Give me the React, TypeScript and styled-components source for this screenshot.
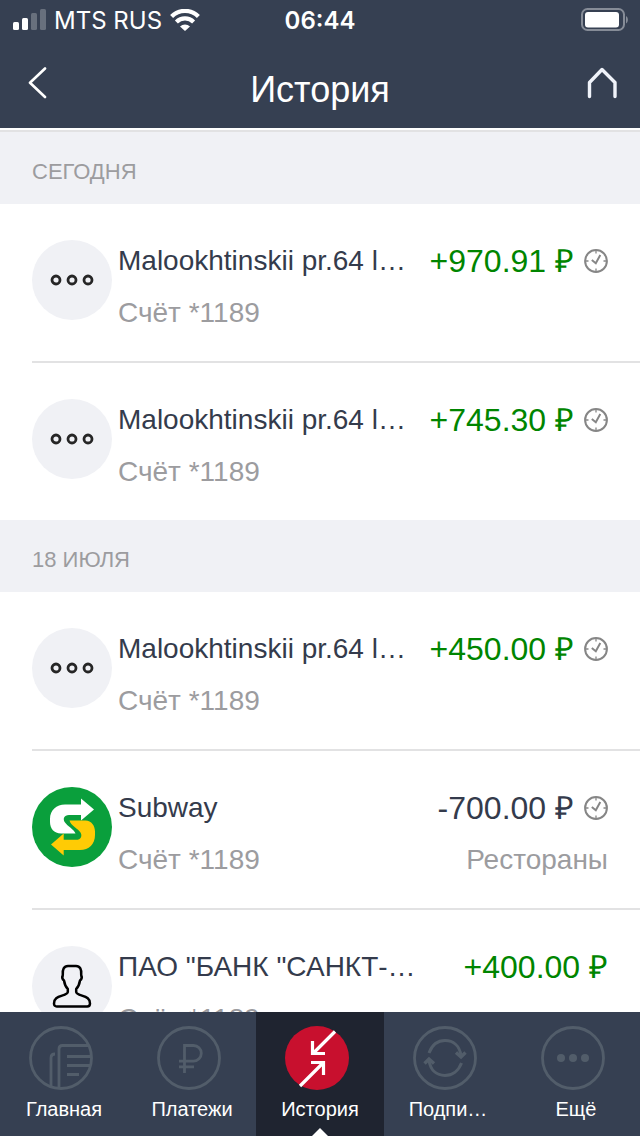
import React from "react";
import styled, { createGlobalStyle } from "styled-components";

const color = {
  bar: "#364052",
  barActive: "#1f2430",
  accent: "#c8102e",
  section: "#f0f1f5",
  ink: "#343b4c",
  muted: "#9c9c9f",
  income: "#008500",
  line: "#e2e2e3",
  tabIcon: "#525d6a",
};

const GlobalStyle = createGlobalStyle`
  * { box-sizing: border-box; }
  body {
    margin: 0;
    background: #fff;
    color: ${color.ink};
    font-family: "Liberation Sans", Arial, sans-serif;
  }
`;

const Screen = styled.div`
  display: flex;
  flex-direction: column;
  height: 100vh;
`;

const Header = styled.header`
  flex: none;
  background: ${color.bar};
  color: #fff;
`;

const StatusBar = styled.div`
  display: grid;
  grid-template-columns: 1fr auto 1fr;
  align-items: center;
  height: 40px;
  padding: 0 12px;
  font-family: Inter, sans-serif;
  font-size: 24px;
`;

const Carrier = styled.div`
  display: flex;
  align-items: center;
  gap: 8px;
  white-space: nowrap;
`;

const Clock = styled.time`
  font-weight: 600;
`;

const BatterySlot = styled.div`
  display: flex;
  justify-content: flex-end;
`;

const TitleBar = styled.div`
  display: grid;
  grid-template-columns: 76px 1fr 76px;
  height: 88px;
`;

const Title = styled.h1`
  margin: 0;
  text-align: center;
  font-size: 36px;
  font-weight: 400;
  line-height: 100px;
`;

const IconButton = styled.button`
  display: flex;
  justify-content: center;
  align-items: center;
  padding: 0 0 14px;
  border: 0;
  background: none;
  color: #fff;
  cursor: pointer;
`;

const History = styled.main`
  flex: 1;
  min-height: 0;
  margin-top: 2px;
  border-top: 2px solid ${color.line};
  overflow-y: auto;
  scrollbar-width: none;
`;

const SectionTitle = styled.h2`
  margin: 0;
  padding: 6px 32px 0;
  height: 72px;
  background: ${color.section};
  color: ${color.muted};
  font-size: 22px;
  font-weight: 400;
  line-height: 67px;
`;

const List = styled.ul`
  margin: 0;
  padding: 0 0 0 32px;
  list-style: none;
`;

const Row = styled.li`
  display: flex;
  gap: 6px;
  height: 159px;
  padding: 36px 32px 0 0;
  border-bottom: 2px solid ${color.line};

  &:last-child {
    height: 157px;
    border-bottom: 0;
  }
`;

const Avatar = styled.div<{ $fill?: string }>`
  display: flex;
  flex: none;
  align-items: center;
  justify-content: center;
  width: 80px;
  height: 80px;
  border-radius: 50%;
  background: ${(p) => p.$fill ?? color.section};
`;

const Details = styled.div`
  flex: 1;
  min-width: 0;
`;

const Line = styled.div`
  display: flex;
  justify-content: space-between;
  gap: 8px;
  height: 52px;
  line-height: 42px;
  white-space: nowrap;
`;

const Name = styled.span`
  min-width: 0;
  overflow: hidden;
  text-overflow: ellipsis;
  font-size: 28px;
`;

const Amount = styled.span<{ $income: boolean }>`
  display: flex;
  align-items: center;
  gap: 10px;
  height: 42px;
  color: ${(p) => (p.$income ? color.income : color.ink)};
  font-size: 32px;
`;

const Note = styled.span`
  color: ${color.muted};
  font-size: 28px;
`;

const TabBar = styled.nav`
  display: grid;
  flex: none;
  grid-template-columns: repeat(5, 1fr);
  height: 124px;
  background: ${color.bar};
`;

const Tab = styled.a<{ $active?: boolean }>`
  position: relative;
  display: flex;
  flex-direction: column;
  align-items: center;
  gap: 6px;
  padding-top: 14px;
  background: ${(p) => (p.$active ? color.barActive : "transparent")};
  color: #fff;
  font-size: 20px;
  line-height: 26px;
  text-decoration: none;

  & > svg {
    margin-right: 6px;
  }

  &::after {
    content: "";
    display: ${(p) => (p.$active ? "block" : "none")};
    position: absolute;
    bottom: 0;
    left: 50%;
    margin-left: -8px;
    border: 8px solid transparent;
    border-top: 0;
    border-bottom-color: #fff;
  }
`;

const SignalIcon = () => (
  <svg width="34" height="22" viewBox="0 0 34 22" fill="#fff" aria-hidden="true">
    <rect x="1" y="13" width="6" height="8" rx="1.5" />
    <rect x="10" y="9" width="6" height="12" rx="1.5" />
    <rect x="19" y="4" width="6" height="17" rx="1.5" opacity=".25" />
    <rect x="28" y="0" width="6" height="21" rx="1.5" opacity=".25" />
  </svg>
);

const WifiIcon = () => (
  <svg width="30" height="22" viewBox="0 0 30 22" fill="none" stroke="#fff" strokeWidth="4.2" aria-hidden="true">
    <path d="M1.6 7.4a19 19 0 0 1 26.8 0" />
    <path d="M6.4 13a12.200 12.200 0 0 1 17.200 0" />
    <path d="M10 17.400a7.200 7.200 0 0 1 10 0L15 22Z" fill="#fff" stroke="none" />
  </svg>
);

const BatteryIcon = () => (
  <svg width="48" height="24" viewBox="0 0 48 24" aria-hidden="true">
    <rect x="2" y="1" width="42" height="21" rx="5.5" fill="none" stroke="#868c97" strokeWidth="2" />
    <rect x="5" y="4" width="34" height="15.500" rx="3" fill="#fff" />
    <path d="M46 8c2.500 1.500 2.500 6 0 7.500Z" fill="#868c97" />
  </svg>
);

const BackIcon = () => (
  <svg width="20" height="32" viewBox="0 0 20 32" fill="none" stroke="currentColor" strokeWidth="2.600" strokeLinecap="round" strokeLinejoin="round" aria-hidden="true">
    <path d="M17 1.500 2 15.800 17 30" />
  </svg>
);

const HomeIcon = () => (
  <svg width="32" height="32" viewBox="0 0 32 32" fill="none" stroke="#f0f3fa" strokeWidth="3.400" strokeLinecap="round" strokeLinejoin="round" aria-hidden="true">
    <path d="M3.500 29.500V15.500L16 2.500l13 13v14" />
  </svg>
);

const DotsIcon = () => (
  <svg width="44" height="12" viewBox="0 0 44 12" fill="none" stroke="#262626" strokeWidth="2.800" aria-hidden="true">
    <circle cx="6" cy="6" r="4" />
    <circle cx="22" cy="6" r="4" />
    <circle cx="38" cy="6" r="4" />
  </svg>
);

const PersonIcon = () => (
  <svg width="40" height="46" viewBox="0 0 40 46" fill="none" stroke="#000" strokeWidth="2.500" strokeLinejoin="round" aria-hidden="true">
    <path d="M15.800 26C13.200 23.500 12.400 20 12 17.500 10.300 16.300 10 14 10.800 12 10.200 6.500 12 3 16 3h8c4 0 5.800 3.500 5.200 9 .8 2 .5 4.300-1.200 5.500-.4 2.500-1.200 6-3.800 8.500v3c0 1.500 2.300 2.500 5.800 3.600 4.700 1.400 8 2.800 8 7.900 0 2-1 3-2.800 3H4.800c-1.800 0-2.800-1-2.800-3 0-5.100 3.300-6.500 8-7.900 3.500-1.100 5.800-2.100 5.800-3.600Z" />
  </svg>
);

const SubwayLogo = () => (
  <svg width="80" height="80" viewBox="0 0 80 80" aria-hidden="true">
    <path fill="#fff" d="M49 11.500 62 22.500 49 33.500V28H37C32 28 30.500 32 33 35.500 35.500 39 42 42.500 43.500 46.500H29C22 46.500 18 41.500 18 35V32C18 23 24.500 17.500 33 17.500H49Z" />
    <path fill="#ffcb05" d="M31.700 68.500 19 57.500 31.700 46.500V52.800H44C49 52.800 50.500 49 48.500 45.500 46.500 42 38.500 38.500 37.500 33.500H53.500C59.500 33.500 63 39 63 44.500V48C63 57 57 63 48 63H31.700Z" />
  </svg>
);

const PendingIcon = () => (
  <svg width="24" height="24" viewBox="0 0 24 24" fill="none" stroke="#868686" strokeWidth="2" role="img" aria-label="В обработке">
    <circle cx="12" cy="12" r="10.900" strokeWidth="2" />
    <path d="m7.800 11 4 3.200L16.300 6" strokeWidth="2" />
    <path d="M12 2v2.500M12 19.500V22M2 12h2.500M19.500 12H22" strokeWidth="1.300" />
  </svg>
);

const tabSvg = {
  width: 64,
  height: 64,
  viewBox: "0 0 64 64",
  fill: "none",
  stroke: color.tabIcon,
  strokeWidth: 2.8,
  "aria-hidden": true,
} as const;

const MainTabIcon = () => (
  <svg {...tabSvg}>
    <circle cx="32" cy="32" r="30.500" />
    <path d="M60 19.500H33.500q-3.500 0-3.500 3.500v39M26 28q-4 0-4 4v28M38 30.500h24M38 39.500h23.500M38 48.500h12" />
  </svg>
);

const PaymentsTabIcon = () => (
  <svg {...tabSvg}>
    <circle cx="32" cy="32" r="30.500" />
    <path d="M27.500 47V19.500h9a7.800 7.800 0 0 1 0 15.600H22M22 40.800h15" />
  </svg>
);

const HistoryTabIcon = () => (
  <svg {...tabSvg} stroke="#fff" strokeWidth={3.2}>
    <circle cx="32" cy="32" r="32" fill={color.accent} stroke="none" />
    <path d="M50 5.500 28 27.500M27.500 15v12.500H40M15 60l23-23M26 36.500h12.500V49" />
  </svg>
);

const SubscriptionsTabIcon = () => (
  <svg {...tabSvg}>
    <circle cx="32" cy="32" r="30.500" />
    <path d="M16 27c3-8 9-12.500 16-12.500 8 0 14.500 5 16 15M48.500 37c-3 8-9.500 12.500-16.500 12.500-8 0-14.500-5-16-15" strokeWidth="3" />
    <path d="m43 26.500 5 4.500 4.500-4.500M11.500 37.500l4.500-4.500 5 4.500" strokeWidth="3.400" />
  </svg>
);

const MoreTabIcon = () => (
  <svg {...tabSvg}>
    <circle cx="32" cy="32" r="30.500" />
    <g fill={color.tabIcon} stroke="none">
      <circle cx="20" cy="32" r="4" />
      <circle cx="32" cy="32" r="4" />
      <circle cx="44" cy="32" r="4" />
    </g>
  </svg>
);

type Operation = {
  name: string;
  amount: string;
  category?: string;
  pending?: boolean;
  kind?: "subway" | "person";
};

const sections: { title: string; items: Operation[] }[] = [
  {
    title: "СЕГОДНЯ",
    items: [
      { name: "Malookhtinskii pr.64 l…", amount: "+970.91 ₽", pending: true },
      { name: "Malookhtinskii pr.64 l…", amount: "+745.30 ₽", pending: true },
    ],
  },
  {
    title: "18 ИЮЛЯ",
    items: [
      { name: "Malookhtinskii pr.64 l…", amount: "+450.00 ₽", pending: true },
      { name: "Subway", amount: "-700.00 ₽", category: "Рестораны", pending: true, kind: "subway" },
      { name: 'ПАО "БАНК "САНКТ-…', amount: "+400.00 ₽", kind: "person" },
    ],
  },
];

const tabs = [
  { label: "Главная", Icon: MainTabIcon },
  { label: "Платежи", Icon: PaymentsTabIcon },
  { label: "История", Icon: HistoryTabIcon, active: true },
  { label: "Подпи…", Icon: SubscriptionsTabIcon },
  { label: "Ещё", Icon: MoreTabIcon },
];

const OperationRow = ({ item }: { item: Operation }) => (
  <Row>
    <Avatar $fill={item.kind === "subway" ? "#0a9f3c" : undefined}>
      {item.kind === "subway" ? <SubwayLogo /> : item.kind === "person" ? <PersonIcon /> : <DotsIcon />}
    </Avatar>
    <Details>
      <Line>
        <Name>{item.name}</Name>
        <Amount $income={item.amount.startsWith("+")}>
          {item.amount}
          {item.pending && <PendingIcon />}
        </Amount>
      </Line>
      <Line>
        <Note>Счёт *1189</Note>
        {item.category && <Note>{item.category}</Note>}
      </Line>
    </Details>
  </Row>
);

export default function App() {
  return (
    <Screen>
      <GlobalStyle />
      <Header>
        <StatusBar>
          <Carrier>
            <SignalIcon />
            MTS RUS
            <WifiIcon />
          </Carrier>
          <Clock>06:44</Clock>
          <BatterySlot>
            <BatteryIcon />
          </BatterySlot>
        </StatusBar>
        <TitleBar>
          <IconButton aria-label="Назад">
            <BackIcon />
          </IconButton>
          <Title>История</Title>
          <IconButton aria-label="На главную">
            <HomeIcon />
          </IconButton>
        </TitleBar>
      </Header>
      <History>
        {sections.map((section) => (
          <section key={section.title}>
            <SectionTitle>{section.title}</SectionTitle>
            <List>
              {section.items.map((item, i) => (
                <OperationRow key={i} item={item} />
              ))}
            </List>
          </section>
        ))}
      </History>
      <TabBar>
        {tabs.map(({ label, Icon, active }) => (
          <Tab key={label} href="#" $active={active} aria-current={active ? "page" : undefined}>
            <Icon />
            {label}
          </Tab>
        ))}
      </TabBar>
    </Screen>
  );
}
